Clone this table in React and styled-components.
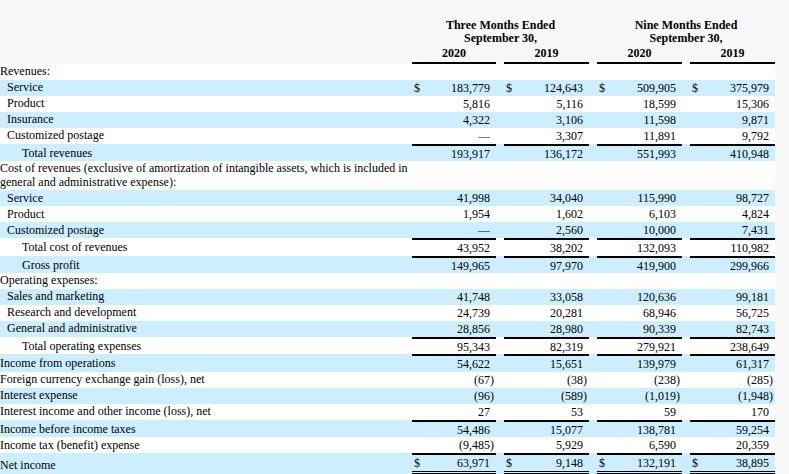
import React from "react"
import styled, { createGlobalStyle } from "styled-components"

const GlobalStyle = createGlobalStyle`
  html, body {
    margin: 0;
    padding: 0;
    background: #f8f8f8;
  }

  body {
    font-family: "Liberation Serif", "Times New Roman", serif;
    font-size: 12px;
    color: #000;
  }
`

const Table = styled.table`
  width: 775px;
  table-layout: fixed;
  border-collapse: separate;
  border-spacing: 0;
  font-size: 12px;
`

const Col = styled.col`
  width: ${({ $w }) => $w}px;
`

const PeriodHead = styled.th`
  padding: 19px 0 0;
  font-weight: bold;
  line-height: 12.5px;
  text-align: center;
  vertical-align: bottom;
`

const YearHead = styled.th`
  padding: 2px 0 2px;
  font-weight: bold;
  line-height: 14px;
  text-align: center;
  border-bottom: 2px solid #000;
`

const Blank = styled.th`
  padding: 0;
`

const Row = styled.tr`
  vertical-align: bottom;
  background: ${({ $shade }) => ($shade ? "#cceeff" : "#ffffff")};
`

const Label = styled.td`
  padding: 1px 0 1px ${({ $level }) => [0, 7, 22][$level]}px;
  line-height: 13.5px;
  white-space: normal;
  vertical-align: bottom;
`

const Amount = styled.td`
  padding: 1px 6px ${({ $rule }) => ($rule ? "0.5px" : "1px")} 2px;
  line-height: 14px;
  text-align: right;
  white-space: nowrap;
  vertical-align: bottom;
  border-top: ${({ $rule }) => ($rule ? "2px solid #000" : "none")};
  border-bottom: ${({ $double }) => ($double ? "3px double #000" : "none")};
`

const Gap = styled.td`
  padding: 0;
  vertical-align: bottom;
`

const Dollar = styled.span`
  float: left;
`

const Paren = styled.span`
  margin-right: -4px;
`

const rows = [
  { label: "Revenues:", level: 0 },
  { label: "Service", level: 1, dollar: true, values: ["183,779", "124,643", "509,905", "375,979"] },
  { label: "Product", level: 1, values: ["5,816", "5,116", "18,599", "15,306"] },
  { label: "Insurance", level: 1, values: ["4,322", "3,106", "11,598", "9,871"] },
  { label: "Customized postage", level: 1, values: ["—", "3,307", "11,891", "9,792"] },
  { label: "Total revenues", level: 2, rule: true, values: ["193,917", "136,172", "551,993", "410,948"] },
  {
    label:
      "Cost of revenues (exclusive of amortization of intangible assets, which is included in general and administrative expense):",
    level: 0,
  },
  { label: "Service", level: 1, values: ["41,998", "34,040", "115,990", "98,727"] },
  { label: "Product", level: 1, values: ["1,954", "1,602", "6,103", "4,824"] },
  { label: "Customized postage", level: 1, values: ["—", "2,560", "10,000", "7,431"] },
  { label: "Total cost of revenues", level: 2, rule: true, values: ["43,952", "38,202", "132,093", "110,982"] },
  { label: "Gross profit", level: 2, rule: true, values: ["149,965", "97,970", "419,900", "299,966"] },
  { label: "Operating expenses:", level: 0 },
  { label: "Sales and marketing", level: 1, values: ["41,748", "33,058", "120,636", "99,181"] },
  { label: "Research and development", level: 1, values: ["24,739", "20,281", "68,946", "56,725"] },
  { label: "General and administrative", level: 1, values: ["28,856", "28,980", "90,339", "82,743"] },
  { label: "Total operating expenses", level: 2, rule: true, values: ["95,343", "82,319", "279,921", "238,649"] },
  { label: "Income from operations", level: 0, rule: true, values: ["54,622", "15,651", "139,979", "61,317"] },
  { label: "Foreign currency exchange gain (loss), net", level: 0, values: ["(67)", "(38)", "(238)", "(285)"] },
  { label: "Interest expense", level: 0, values: ["(96)", "(589)", "(1,019)", "(1,948)"] },
  { label: "Interest income and other income (loss), net", level: 0, values: ["27", "53", "59", "170"] },
  { label: "Income before income taxes", level: 0, rule: true, values: ["54,486", "15,077", "138,781", "59,254"] },
  { label: "Income tax (benefit) expense", level: 0, values: ["(9,485)", "5,929", "6,590", "20,359"] },
  { label: "Net income", level: 0, rule: true, double: true, dollar: true, values: ["63,971", "9,148", "132,191", "38,895"] },
]

function Value({ text }) {
  if (text.endsWith(")")) {
    return (
      <>
        {text.slice(0, -1)}
        <Paren>)</Paren>
      </>
    )
  }
  return text
}

function StatementRow({ row, shade }) {
  const cells = []
  for (let i = 0; i < 4; i++) {
    if (i > 0) cells.push(<Gap key={"g" + i} />)
    cells.push(
      <Amount key={"a" + i} $rule={row.rule} $double={row.double}>
        {row.dollar && <Dollar>$</Dollar>}
        {row.values && <Value text={row.values[i]} />}
      </Amount>
    )
  }

  return (
    <Row $shade={shade}>
      <Label $level={row.level}>{row.label}</Label>
      {cells}
    </Row>
  )
}

export default function App() {
  return (
    <>
      <GlobalStyle />
      <Table>
        <colgroup>
          <Col $w={412} />
          <Col $w={84} />
          <Col $w={8} />
          <Col $w={85} />
          <Col $w={8} />
          <Col $w={85} />
          <Col $w={8} />
          <Col $w={85} />
        </colgroup>
        <thead>
          <tr>
            <Blank />
            <PeriodHead colSpan={3}>
              Three Months Ended
              <br />
              September 30,
            </PeriodHead>
            <Blank />
            <PeriodHead colSpan={3}>
              Nine Months Ended
              <br />
              September 30,
            </PeriodHead>
          </tr>
          <tr>
            <Blank />
            <YearHead>2020</YearHead>
            <Blank />
            <YearHead>2019</YearHead>
            <Blank />
            <YearHead>2020</YearHead>
            <Blank />
            <YearHead>2019</YearHead>
          </tr>
        </thead>
        <tbody>
          {rows.map((row, i) => (
            <StatementRow key={i} row={row} shade={i % 2 === 1} />
          ))}
        </tbody>
      </Table>
    </>
  )
}
